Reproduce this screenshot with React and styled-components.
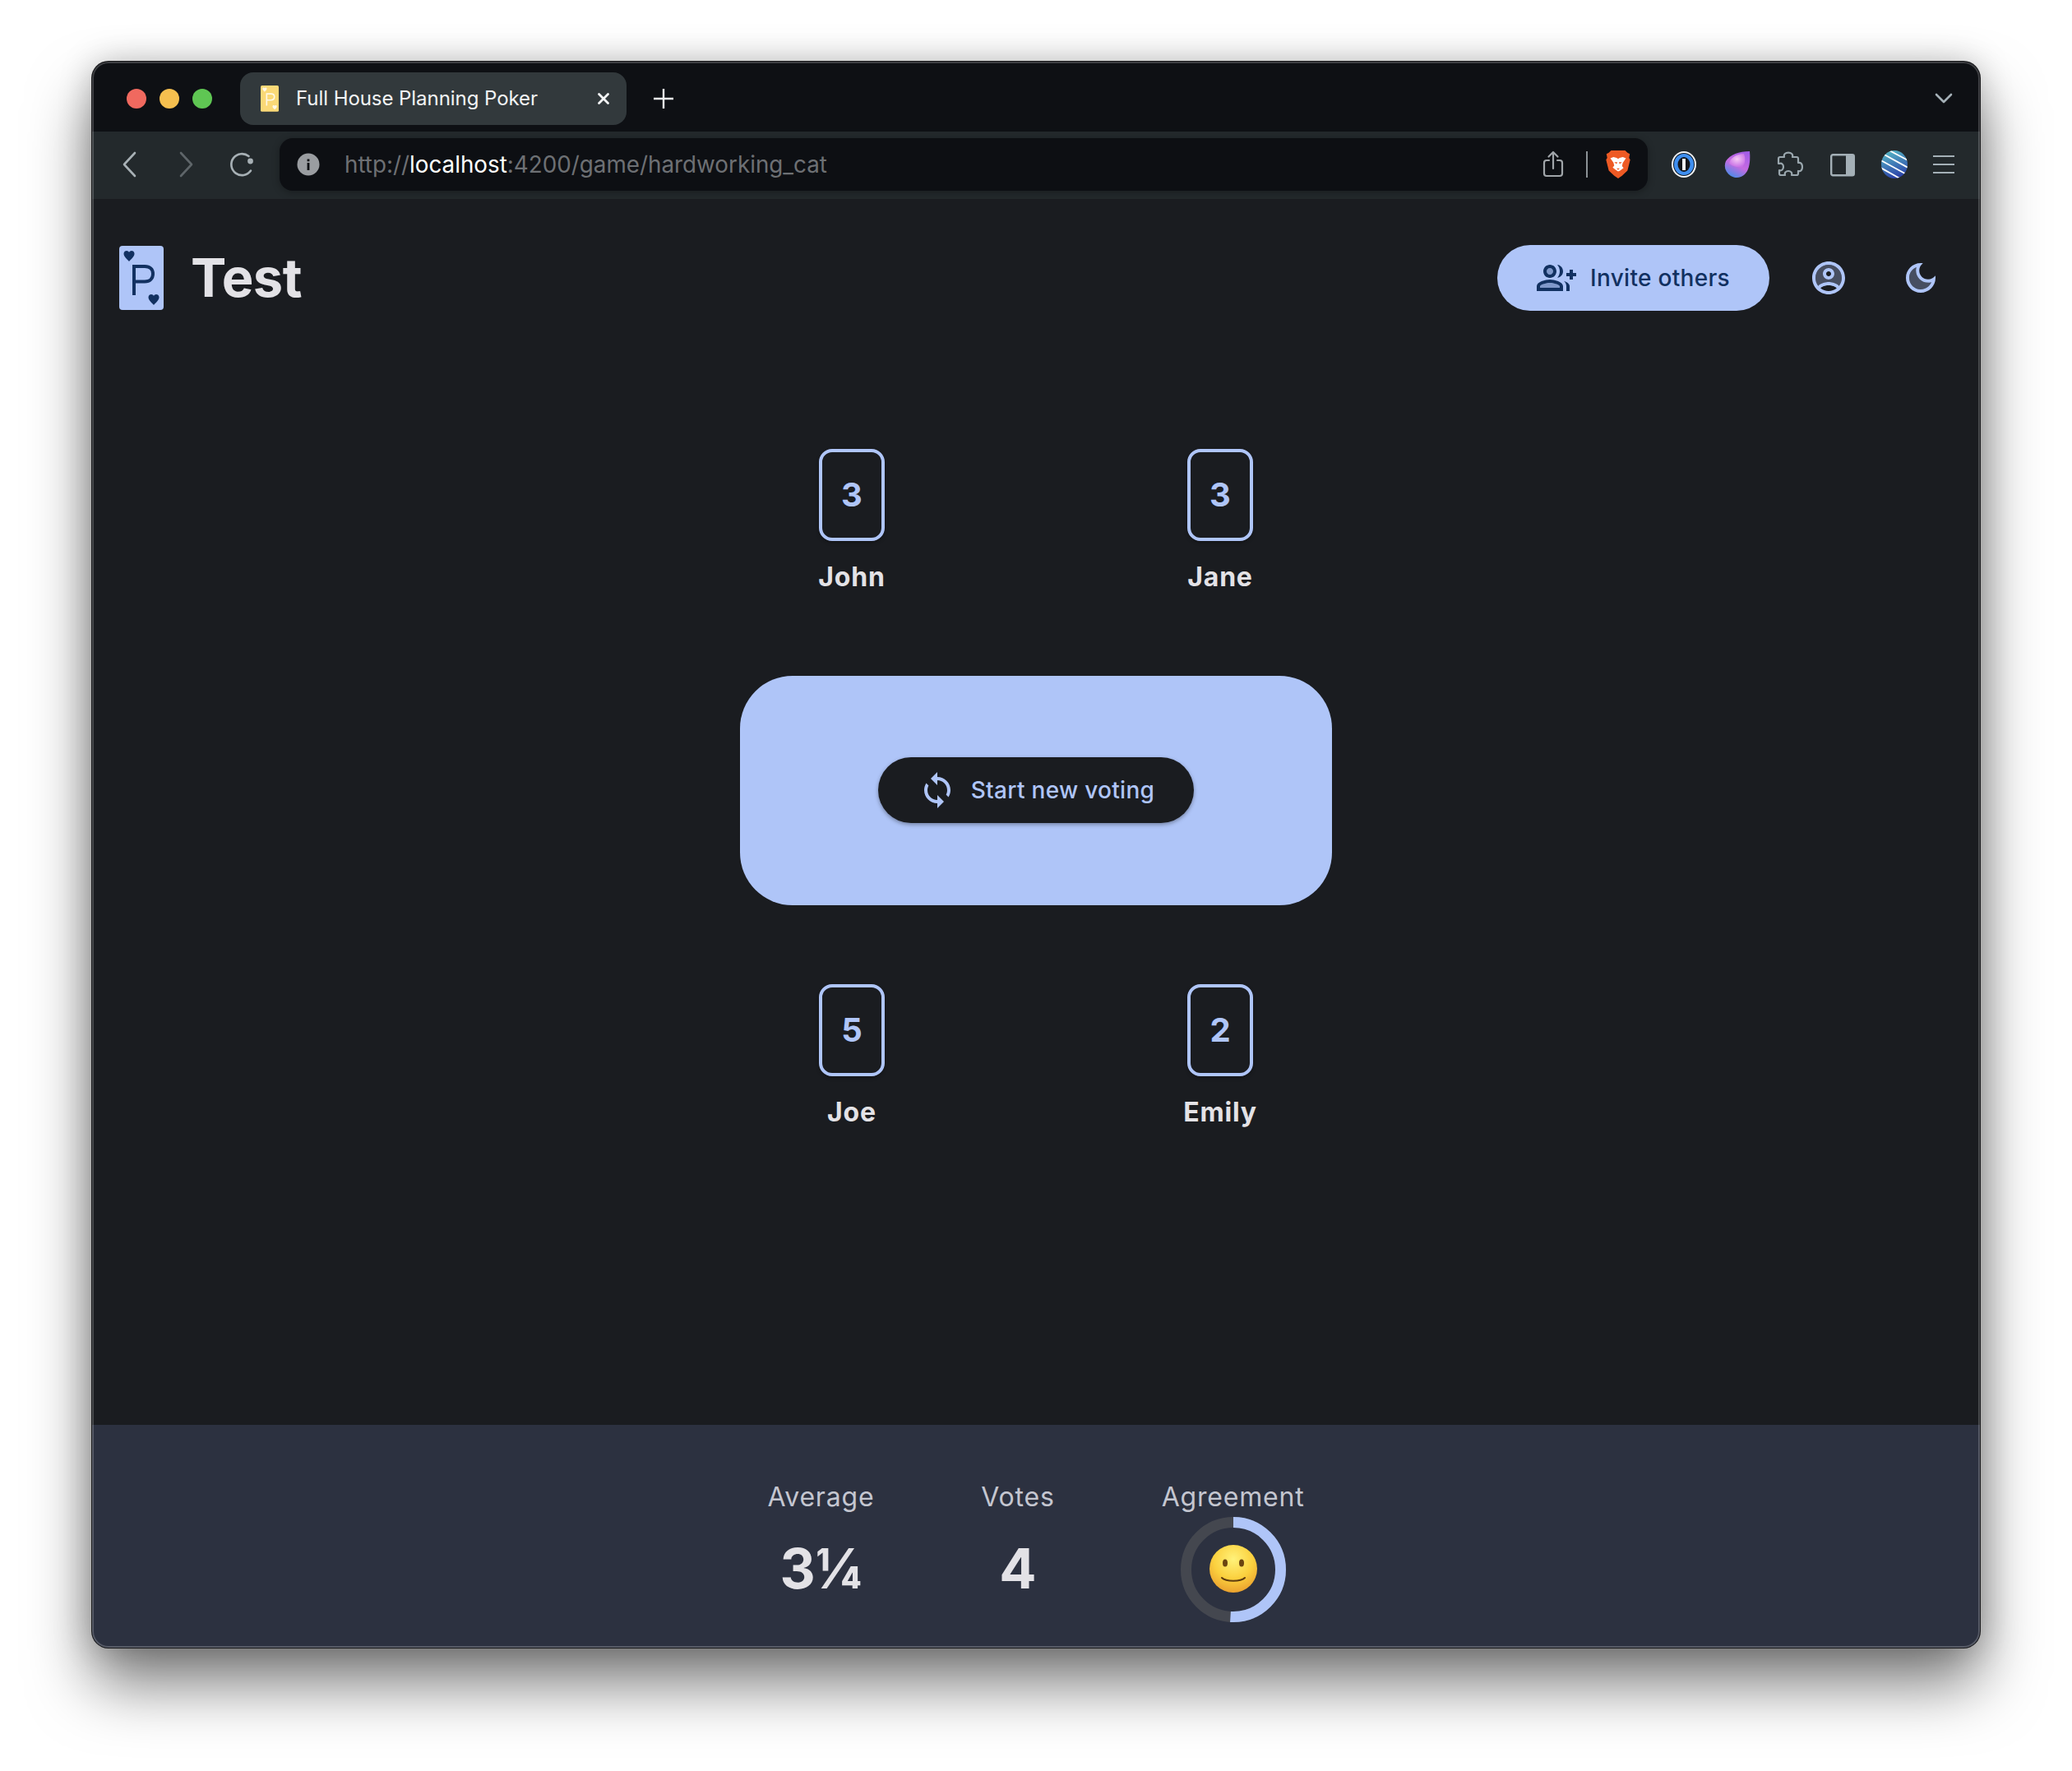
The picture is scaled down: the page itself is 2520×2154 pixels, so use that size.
import React from "react";
import styled, { createGlobalStyle } from "styled-components";

const GlobalStyle = createGlobalStyle`
  html, body {
    margin: 0;
    padding: 0;
    background: #fff;
  }
  body {
    font-family: Inter, "Liberation Sans", sans-serif;
  }
`;

const Stage = styled.div`
  width: 2520px;
  height: 2154px;
  padding: 75px 112px 0;
  box-sizing: border-box;
  overflow: hidden;
`;

const BrowserWindow = styled.div`
  position: relative;
  height: 1929px;
  border-radius: 20px;
  display: flex;
  flex-direction: column;
  overflow: hidden;
  background: #1a1c20;
  box-shadow: 0 0 0 1px #1a1a1c, 0 44px 76px rgba(0, 0, 0, 0.52), 0 0 40px rgba(0, 0, 0, 0.22);
  &::after {
    content: "";
    position: absolute;
    inset: 0;
    border-radius: 20px;
    box-shadow: inset 0 0 0 2px rgba(255, 255, 255, 0.2);
    pointer-events: none;
  }
`;

/* tab strip */
const TabStrip = styled.div`
  height: 85px;
  flex: none;
  box-sizing: border-box;
  padding: 13px 33px 8px 42px;
  background: #0e1014;
  display: flex;
  align-items: center;
`;

const Lights = styled.div`
  display: flex;
  gap: 16px;
  margin-right: 34px;
`;

const Light = styled.span`
  width: 24px;
  height: 24px;
  border-radius: 50%;
  background: ${(p) => p.$color};
`;

const Tab = styled.div`
  width: 470px;
  height: 64px;
  border-radius: 16px;
  background: #32393c;
  display: flex;
  align-items: center;
  padding: 0 20px 0 25px;
  box-sizing: border-box;
  color: #f2f4f5;
  font-size: 24px;
`;

const TabTitle = styled.span`
  margin: -2px 0 0 21px;
  flex: 1;
  letter-spacing: -0.06px;
  white-space: nowrap;
`;

const NewTab = styled.div`
  margin-left: 33px;
  display: flex;
`;

const StripEnd = styled.div`
  margin-left: auto;
  display: flex;
`;

/* toolbar */
const Toolbar = styled.div`
  height: 82px;
  flex: none;
  box-sizing: border-box;
  background: #23292c;
  display: flex;
  align-items: center;
  padding: 0 14px 2px 29px;
`;

const NavButtons = styled.div`
  display: flex;
  align-items: center;
  gap: 34px;
  width: 199px;
`;

const NavSlot = styled.div`
  width: 34px;
  display: flex;
  justify-content: center;
`;

const AddressBar = styled.div`
  width: 1664px;
  height: 64px;
  box-sizing: border-box;
  border-radius: 16px;
  background: #0d0f13;
  box-shadow: 0 2px 10px rgba(0, 0, 0, 0.3);
  display: flex;
  align-items: center;
  padding: 0 20px 0 21px;
`;

const Url = styled.div`
  margin-left: 30px;
  flex: 1;
  font-size: 27.8px;
  color: #6d7074;
  white-space: nowrap;
  b {
    font-weight: 400;
    color: #fff;
  }
`;

const Divider = styled.span`
  width: 2px;
  height: 32px;
  background: #8b9296;
  margin: 0 21px 0 27px;
`;

const Extensions = styled.div`
  flex: 1;
  margin-left: 12px;
  display: grid;
  grid-template-columns: 64.5px 64px 64.5px 64px 61px 60px;
  align-items: center;
  justify-items: center;
  svg {
    display: block;
  }
`;

/* page */
const Page = styled.div`
  flex: 1;
  display: flex;
  flex-direction: column;
  background: #1a1c20;
`;

const Header = styled.header`
  display: flex;
  align-items: center;
  padding: 56px 48px 0 33px;
`;

const Title = styled.h1`
  margin: 0 0 0 33px;
  flex: 1;
  font-size: 65px;
  line-height: 80px;
  font-weight: 700;
  letter-spacing: -0.6px;
  color: #e3e2e6;
`;

const PillButton = styled.button`
  height: 80px;
  padding: 0 48px;
  border: 0;
  border-radius: 40px;
  display: flex;
  align-items: center;
  gap: 17px;
  font-family: inherit;
  font-size: 28px;
  font-weight: 500;
  letter-spacing: 0.3px;
  white-space: nowrap;
  background: ${(p) => (p.$dark ? "#1a1c20" : "#afc5f8")};
  color: ${(p) => (p.$dark ? "#afc5f8" : "#123161")};
  box-shadow: ${(p) => (p.$dark ? "0 2px 5px rgba(0, 0, 0, 0.35)" : "none")};
`;

const IconButton = styled.div`
  width: 48px;
  height: 48px;
  color: #afc5f8;
  margin-left: ${(p) => p.$gap}px;
`;

const Board = styled.main`
  flex: 1;
  display: flex;
  flex-direction: column;
  align-items: center;
  padding-top: 168px;
`;

const PlayerRow = styled.div`
  display: flex;
  gap: 288px;
`;

const Player = styled.div`
  width: 160px;
  display: flex;
  flex-direction: column;
  align-items: center;
`;

const VoteCard = styled.div`
  width: 80px;
  height: 112px;
  box-sizing: border-box;
  border: 4px solid #afc5f8;
  border-radius: 16px;
  display: flex;
  align-items: center;
  justify-content: center;
  padding-bottom: 2px;
  color: #afc5f8;
  font-size: 40px;
  font-weight: 700;
  box-shadow: 0 2px 4px rgba(0, 0, 0, 0.3);
`;

const PlayerName = styled.div`
  margin-top: 24px;
  font-size: 32px;
  line-height: 40px;
  font-weight: 700;
  letter-spacing: 0.8px;
  color: #e3e2e6;
`;

const Table = styled.div`
  width: 720px;
  height: 279px;
  margin: 100px 0 96px;
  border-radius: 64px;
  background: #afc5f8;
  display: flex;
  justify-content: center;
  padding-top: 99px;
  box-sizing: border-box;
`;

/* results */
const Results = styled.footer`
  height: 271px;
  flex: none;
  box-sizing: border-box;
  background: #2c3140;
  display: flex;
  justify-content: center;
  gap: 130px;
  padding-top: 68px;
`;

const Stat = styled.div`
  display: flex;
  flex-direction: column;
  align-items: center;
`;

const StatLabel = styled.div`
  font-size: 32px;
  line-height: 40px;
  letter-spacing: 0.8px;
  color: #c4c6d0;
`;

const StatValue = styled.div`
  margin-top: 27px;
  height: 80px;
  line-height: 80px;
  font-size: 67px;
  font-weight: 700;
  color: #e3e2e6;
`;

const Donut = styled.div`
  margin-top: 4px;
`;

const Back = () => (
  <svg width="20" height="32" viewBox="0 0 20 32" fill="none" stroke="#a7b0b5" strokeWidth="2.6" strokeLinecap="round" strokeLinejoin="round">
    <path d="M16 2 3 16l13 14" />
  </svg>
);

const Forward = () => (
  <svg width="20" height="32" viewBox="0 0 20 32" fill="none" stroke="#5e6569" strokeWidth="2.6" strokeLinecap="round" strokeLinejoin="round">
    <path d="M4 2l13 14L4 30" />
  </svg>
);

const Reload = () => (
  <svg width="32" height="32" viewBox="0 0 32 32" fill="none" stroke="#a7b0b5" strokeWidth="2.6" strokeLinecap="round">
    <path d="M27 23.5A13 13 0 1 1 24.5 6" />
    <circle cx="26.5" cy="12" r="3.4" fill="#a7b0b5" stroke="none" />
  </svg>
);

const InfoDot = () => (
  <svg width="28" height="28" viewBox="0 0 28 28">
    <circle cx="14" cy="14" r="13.5" fill="#9a9da1" />
    <rect x="12.6" y="12" width="2.8" height="9" fill="#0d0f13" />
    <rect x="12.6" y="7.5" width="2.8" height="2.8" fill="#0d0f13" />
  </svg>
);

const Share = () => (
  <svg width="26" height="34" viewBox="0 0 26 34" fill="none" stroke="#a0a5a9" strokeWidth="2.2" strokeLinecap="round" strokeLinejoin="round">
    <path d="M8 12H5a3 3 0 0 0-3 3v13a3 3 0 0 0 3 3h16a3 3 0 0 0 3-3V15a3 3 0 0 0-3-3h-3" />
    <path d="M13 22V2M7.5 7.5 13 2l5.5 5.5" />
  </svg>
);

const BraveLogo = () => (
  <svg width="32" height="36" viewBox="0 0 32 38">
    <path d="M7 1h18l3 3 3 1.500-1 5 1.500 2.500L28 27l-7 6.500-5 3.500-5-3.500L4 27 .5 13 2 10.500l-1-5L4 4z" fill="#ee5a24" />
    <path d="M6 11l4-1.500 4 1 2 1.500 2-1.500 4-1 4 1.500-4 6-1 4 2 2.500-4.500 3.500L16 28l-2.500-1.500L9 23l2-2.500-1-4z" fill="#fff" />
    <path d="M11 16h4l-1 2.500zM17 16h4l-3 2.500zM14 24h4l-2 2z" fill="#ee5a24" />
  </svg>
);

const OnePassword = () => (
  <svg width="30" height="32" viewBox="0 0 30 32">
    <ellipse cx="15" cy="16" rx="15" ry="16" fill="#f4f6f8" />
    <ellipse cx="15" cy="16" rx="13" ry="14" fill="#0f1a28" />
    <ellipse cx="15" cy="16" rx="12" ry="13" fill="#3f8ff0" />
    <ellipse cx="15" cy="16" rx="7.500" ry="9" fill="#12161c" />
    <rect x="13" y="9" width="4" height="14" fill="#eef1f4" />
  </svg>
);

const PurpleDrop = () => (
  <svg width="32" height="34" viewBox="0 0 32 34">
    <defs>
      <linearGradient id="dropFill" x1="0.8" y1="0" x2="0.3" y2="1">
        <stop offset="0" stopColor="#a35de8" />
        <stop offset="0.55" stopColor="#c66be0" />
        <stop offset="1" stopColor="#4a8be8" />
      </linearGradient>
      <radialGradient id="dropGlow" cx="0.5" cy="0.4" r="0.6">
        <stop offset="0" stopColor="#f6c8f4" />
        <stop offset="1" stopColor="#c86fe6" />
      </radialGradient>
    </defs>
    <path d="M31 1c1 11 0 22-6 28-5 5-12 5-17 2C2 27-1 20 2 13 7 5 18 1 31 1z" fill="url(#dropFill)" />
    <path d="M24 4c2 5 2 12-2 16-4 1-11 0-16-4C7 9 15 4 24 4z" fill="url(#dropGlow)" />
  </svg>
);

const ExtensionPuzzle = () => (
  <svg width="32" height="32" viewBox="0 0 32 32" fill="none" stroke="#9aa7ae" strokeWidth="2.2" strokeLinejoin="round">
    <path d="M9 7C8 3.500 10.500 1.700 14 1.700S20 3.500 19 7h5a2 2 0 0 1 2 2v5c3-1 5 1.500 5 5s-2 6-5 5v3a2 2 0 0 1-2 2h-6c1-3-1-5-4-5s-5 2-4 5H5a2 2 0 0 1-2-2v-4c3 1 5-1 5-4s-2-5-5-4H2V9a2 2 0 0 1 2-2z" />
  </svg>
);

const SidebarIcon = () => (
  <svg width="30" height="30" viewBox="0 0 30 30">
    <rect x="1.200" y="3.200" width="27.600" height="25" rx="2" fill="none" stroke="#a4b0b7" strokeWidth="2.400" />
    <rect x="19" y="3" width="10" height="25" fill="#a4b0b7" />
  </svg>
);

const StripedGlobe = () => (
  <svg width="32" height="34" viewBox="0 0 32 34">
    <defs>
      <linearGradient id="globeFill" x1="0.3" y1="0" x2="0.6" y2="1">
        <stop offset="0" stopColor="#55b5c4" />
        <stop offset="1" stopColor="#2b3fa8" />
      </linearGradient>
      <clipPath id="globeClip">
        <ellipse cx="16" cy="17" rx="16" ry="17" />
      </clipPath>
    </defs>
    <ellipse cx="16" cy="17" rx="16" ry="17" fill="url(#globeFill)" />
    <g clipPath="url(#globeClip)" stroke="#fff" strokeWidth="1.800">
      <path d="M6 -2 40 16M-2 2 40 25M-4 10 36 32M-6 18 26 36" />
    </g>
  </svg>
);

const MenuIcon = () => (
  <svg width="26" height="24" viewBox="0 0 26 24" stroke="#a4b0b7" strokeWidth="2.200">
    <path d="M0 2h26M0 12h26M0 22h26" />
  </svg>
);

const CloseIcon = () => (
  <svg width="16" height="16" viewBox="0 0 16 16" stroke="#f4f6f7" strokeWidth="2.800" strokeLinecap="round">
    <path d="M2.500 2.500l11 11M13.500 2.500l-11 11" />
  </svg>
);

const PlusIcon = () => (
  <svg width="24" height="24" viewBox="0 0 24 24" stroke="#eef0f1" strokeWidth="2.400">
    <path d="M12 0v24M0 12h24" />
  </svg>
);

const ChevronDown = () => (
  <svg width="22" height="14" viewBox="0 0 22 14" fill="none" stroke="#a4b0b7" strokeWidth="2.600" strokeLinecap="round" strokeLinejoin="round">
    <path d="M2 2l9 9 9-9" />
  </svg>
);

const CardLogo = ({ paper, ink, width }) => (
  <svg width={width} viewBox="0 0 54 78" style={{ display: "block", flex: "none" }}>
    <rect width="54" height="78" rx="4" fill={paper} />
    <path d="M12 19c-2-2.500-6.500-5.500-6.500-9.500C5.500 7 7.500 6 9 6c1.300 0 2.400.7 3 1.900C12.600 6.700 13.700 6 15 6c1.500 0 3.500 1 3.500 3.500 0 4-4.500 7-6.500 9.500z" fill={ink} />
    <path d="M42 72c-2-2.500-6.500-5.500-6.500-9.500 0-2.500 2-3.500 3.500-3.500 1.300 0 2.400.7 3 1.900.6-1.200 1.700-1.900 3-1.900 1.500 0 3.500 1 3.500 3.500 0 4-4.500 7-6.500 9.500z" fill={ink} />
    <path d="M18 60V25h13c6.500 0 10 3.500 10 9s-3.500 9.500-10 9.500H18" fill="none" stroke={ink} strokeWidth="4" />
  </svg>
);

const GroupAdd = () => (
  <svg width="48" height="48" viewBox="0 0 24 24" fill="currentColor">
    <circle cx="8" cy="8" r="2" opacity="0.3" />
    <path d="M8 15c-2.700 0-5.800 1.290-6 2.010V18h12v-1c-.2-.710-3.300-2-6-2z" opacity="0.3" />
    <path d="M22 9V7h-2v2h-2v2h2v2h2v-2h2V9zM8 12c2.210 0 4-1.790 4-4s-1.790-4-4-4-4 1.790-4 4 1.790 4 4 4zm0-6c1.100 0 2 .9 2 2s-.9 2-2 2-2-.9-2-2 .9-2 2-2zm0 7c-2.670 0-8 1.340-8 4v3h16v-3c0-2.660-5.330-4-8-4zm6 5H2v-.99C2.200 16.290 5.300 15 8 15s5.800 1.290 6 2zM12.510 4.050C13.430 5.110 14 6.490 14 8s-.57 2.890-1.490 3.950C14.470 11.700 16 10.040 16 8s-1.530-3.700-3.490-3.950zM16.530 13.830C17.420 14.660 18 15.700 18 17v3h2v-3c0-1.450-1.590-2.510-3.470-3.170z" />
  </svg>
);

const AccountCircle = () => (
  <svg width="48" height="48" viewBox="0 0 24 24" fill="currentColor">
    <path d="M12 4c-4.410 0-8 3.590-8 8 0 1.820.62 3.490 1.640 4.830 1.430-1.740 4.900-2.330 6.360-2.330s4.930.59 6.360 2.330C19.380 15.490 20 13.820 20 12c0-4.410-3.590-8-8-8zm0 9c-1.940 0-3.500-1.560-3.500-3.500S10.060 6 12 6s3.500 1.560 3.500 3.500S13.940 13 12 13z" opacity="0.3" />
    <path d="M12 2C6.480 2 2 6.480 2 12s4.480 10 10 10 10-4.480 10-10S17.520 2 12 2zM7.070 18.280c.43-.9 3.050-1.780 4.930-1.780s4.510.88 4.930 1.780C15.570 19.360 13.860 20 12 20s-3.570-.64-4.930-1.720zm11.290-1.450c-1.430-1.740-4.900-2.330-6.360-2.330s-4.930.59-6.360 2.330C4.620 15.490 4 13.820 4 12c0-4.410 3.590-8 8-8s8 3.590 8 8c0 1.820-.62 3.490-1.640 4.830zM12 6c-1.940 0-3.500 1.560-3.500 3.500S10.060 13 12 13s3.500-1.560 3.500-3.500S13.940 6 12 6zm0 5c-.83 0-1.500-.67-1.500-1.500S11.170 8 12 8s1.500.67 1.500 1.500S12.830 11 12 11z" />
  </svg>
);

const DarkMode = () => (
  <svg width="48" height="48" viewBox="0 0 24 24" fill="currentColor">
    <path d="M9.370 5.510C9.190 6.150 9.100 6.820 9.100 7.500c0 4.080 3.320 7.400 7.400 7.400.68 0 1.350-.09 1.990-.27C17.450 17.190 14.930 19 12 19c-3.860 0-7-3.140-7-7 0-2.930 1.810-5.450 4.370-6.490z" opacity="0.3" />
    <path d="M9.370 5.510C9.190 6.150 9.100 6.820 9.100 7.500c0 4.080 3.320 7.400 7.400 7.400.68 0 1.350-.09 1.990-.27C17.450 17.190 14.930 19 12 19c-3.860 0-7-3.140-7-7 0-2.930 1.810-5.450 4.370-6.490zM12 3c-4.970 0-9 4.030-9 9s4.030 9 9 9 9-4.030 9-9c0-.46-.04-.92-.1-1.360-.98 1.370-2.580 2.260-4.400 2.260-2.980 0-5.400-2.420-5.400-5.400 0-1.810.89-3.420 2.260-4.400-.44-.06-.9-.1-1.360-.1z" />
  </svg>
);

const SyncIcon = () => (
  <svg width="48" height="48" viewBox="0 0 24 24" fill="currentColor">
    <path d="M12 4V1L8 5l4 4V6c3.310 0 6 2.690 6 6 0 1.010-.25 1.970-.7 2.800l1.460 1.460C19.540 15.030 20 13.570 20 12c0-4.420-3.580-8-8-8zm0 14c-3.310 0-6-2.690-6-6 0-1.010.25-1.970.7-2.800L5.240 7.740C4.460 8.970 4 10.430 4 12c0 4.420 3.580 8 8 8v3l4-4-4-4v3z" />
  </svg>
);

const AgreementRing = () => (
  <svg width="128" height="128" viewBox="0 0 128 128" style={{ display: "block" }}>
    <defs>
      <radialGradient id="faceFill" cx="0.5" cy="0.3" r="0.75">
        <stop offset="0" stopColor="#fff27a" />
        <stop offset="0.55" stopColor="#fbd03e" />
        <stop offset="1" stopColor="#e89a2c" />
      </radialGradient>
    </defs>
    <circle cx="64" cy="64" r="57.500" fill="none" stroke="#44474f" strokeWidth="13" />
    <circle
      cx="64"
      cy="64"
      r="57.500"
      fill="none"
      stroke="#afc5f8"
      strokeWidth="13"
      pathLength="100"
      strokeDasharray="51 100"
      transform="rotate(-90 64 64)"
    />
    <circle cx="64" cy="63" r="29" fill="url(#faceFill)" />
    <ellipse cx="54" cy="56" rx="3" ry="4.500" fill="#6b4410" />
    <ellipse cx="74" cy="56" rx="3" ry="4.500" fill="#6b4410" />
    <path d="M50 74c5 5 23 5 28 0" fill="none" stroke="#5c3a0e" strokeWidth="2" strokeLinecap="round" />
  </svg>
);

const players = [
  [
    { name: "John", vote: "3" },
    { name: "Jane", vote: "3" },
  ],
  [
    { name: "Joe", vote: "5" },
    { name: "Emily", vote: "2" },
  ],
];

const PlayerSeat = ({ name, vote }) => (
  <Player>
    <VoteCard>{vote}</VoteCard>
    <PlayerName>{name}</PlayerName>
  </Player>
);

const App = () => {
  return (
    <>
      <GlobalStyle />
      <Stage>
        <BrowserWindow>
          <TabStrip>
            <Lights>
              <Light $color="#f0695f" />
              <Light $color="#f5bf4f" />
              <Light $color="#5fc653" />
            </Lights>
            <Tab>
              <CardLogo paper="#fbd977" ink="#fff8e6" width={22} />
              <TabTitle>Full House Planning Poker</TabTitle>
              <CloseIcon />
            </Tab>
            <NewTab>
              <PlusIcon />
            </NewTab>
            <StripEnd>
              <ChevronDown />
            </StripEnd>
          </TabStrip>

          <Toolbar>
            <NavButtons>
              <NavSlot>
                <Back />
              </NavSlot>
              <NavSlot>
                <Forward />
              </NavSlot>
              <NavSlot>
                <Reload />
              </NavSlot>
            </NavButtons>
            <AddressBar>
              <InfoDot />
              <Url>
                http://<b>localhost</b>:4200/game/hardworking_cat
              </Url>
              <Share />
              <Divider />
              <BraveLogo />
            </AddressBar>
            <Extensions>
              <OnePassword />
              <PurpleDrop />
              <ExtensionPuzzle />
              <SidebarIcon />
              <StripedGlobe />
              <MenuIcon />
            </Extensions>
          </Toolbar>

          <Page>
            <Header>
              <CardLogo paper="#afc5f8" ink="#123161" width={54} />
              <Title>Test</Title>
              <PillButton>
                <GroupAdd />
                Invite others
              </PillButton>
              <IconButton $gap={48}>
                <AccountCircle />
              </IconButton>
              <IconButton $gap={64}>
                <DarkMode />
              </IconButton>
            </Header>

            <Board>
              <PlayerRow>
                {players[0].map((p) => (
                  <PlayerSeat key={p.name} {...p} />
                ))}
              </PlayerRow>
              <Table>
                <PillButton $dark>
                  <SyncIcon />
                  Start new voting
                </PillButton>
              </Table>
              <PlayerRow>
                {players[1].map((p) => (
                  <PlayerSeat key={p.name} {...p} />
                ))}
              </PlayerRow>
            </Board>

            <Results>
              <Stat>
                <StatLabel>Average</StatLabel>
                <StatValue>3¼</StatValue>
              </Stat>
              <Stat>
                <StatLabel>Votes</StatLabel>
                <StatValue>4</StatValue>
              </Stat>
              <Stat>
                <StatLabel>Agreement</StatLabel>
                <Donut>
                  <AgreementRing />
                </Donut>
              </Stat>
            </Results>
          </Page>
        </BrowserWindow>
      </Stage>
    </>
  );
};

export default App;
